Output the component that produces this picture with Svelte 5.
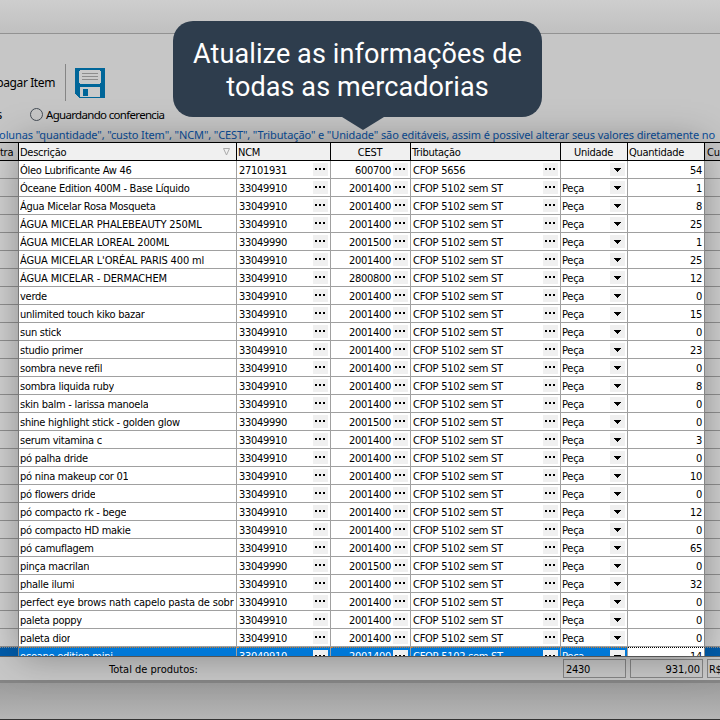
<script lang="ts">
  type Row = {
    name: string;
    ncm: string;
    cest: string;
    tax: string;
    unit: string;
    qty: number;
  };

  function row(name: string, qty: number, ncm = '33049910', cest = '2001400'): Row {
    return { name, ncm, cest, tax: 'CFOP 5102 sem ST', unit: 'Peça', qty };
  }

  const rows: Row[] = [
    { name: 'Óleo Lubrificante Aw 46', ncm: '27101931', cest: '600700', tax: 'CFOP 5656', unit: '', qty: 54 },
    row('Óceane Edition 400M - Base Líquido', 1),
    row('Água Micelar Rosa Mosqueta', 8),
    row('ÁGUA MICELAR PHALEBEAUTY 250ML', 25),
    row('ÁGUA MICELAR LOREAL 200ML', 1, '33049990', '2001500'),
    row('ÁGUA MICELAR L\'ORÉAL PARIS 400 ml', 25),
    row('ÁGUA MICELAR - DERMACHEM', 12, '33049910', '2800800'),
    row('verde', 0),
    row('unlimited touch kiko bazar', 15),
    row('sun stick', 0),
    row('studio primer', 23),
    row('sombra neve refil', 0),
    row('sombra liquida ruby', 8),
    row('skin balm - larissa manoela', 0),
    row('shine highlight stick - golden glow', 0, '33049990', '2001500'),
    row('serum vitamina c', 3),
    row('pó palha dride', 0),
    row('pó nina makeup cor 01', 10),
    row('pó flowers dride', 0),
    row('pó compacto rk - bege', 12),
    row('pó compacto HD makie', 0),
    row('pó camuflagem', 65),
    row('pinça macrilan', 0, '33049990', '2001500'),
    row('phalle ilumi', 32),
    row('perfect eye brows nath capelo pasta de sobr', 0),
    row('paleta poppy', 0),
    row('paleta dior', 0),
    row('oceane edition mini', 14)
  ];

  let selected = $state(rows.length - 1);
</script>

{#snippet dots()}
  <button class="cell-btn" aria-label="Abrir">
    <svg width="15" height="13" shape-rendering="crispEdges">
      <path d="M2 5h2v2h-2zM6 5h2v2h-2zM10 5h2v2h-2z" />
    </svg>
  </button>
{/snippet}

{#snippet arrow()}
  <button class="cell-btn" aria-label="Escolher">
    <svg width="15" height="13" shape-rendering="crispEdges">
      <path d="M4 5h7v1h-1v1h-1v1h-1v1h-1v-1h-1v-1h-1v-1h-1z" />
    </svg>
  </button>
{/snippet}

<div class="screen">
  <div class="titlebar"></div>

  <header>
    <div class="toolbar">
      <span class="tool-label">pagar Item</span>
      <span class="divider"></span>
      <svg class="save" width="30" height="30" viewBox="0 0 30 30" shape-rendering="crispEdges">
        <path fill="#006699" d="M0 0h30v30H4v-1H3v-1H2v-1H1v-1H0z" />
        <path fill="#cacaca" d="M5 2h20v1h1v12h-1v1H5v-1H4V3h1zM5 19h20v10H5z" />
        <path fill="#8d8d8d" d="M7 5h16v1H7zM7 8h16v1H7zM7 11h16v1H7z" />
        <path fill="#006699" d="M8 21h5v7H8z" />
      </svg>
    </div>
    <div class="filters">
      <span class="cut">s</span>
      <i class="radio"></i>
      <span class="filter-label">Aguardando conferencia</span>
    </div>
    <p class="hint">olunas "quantidade", "custo Item", "NCM", "CEST", "Tributação" e "Unidade" são editáveis, assim é possivel alterar seus valores diretamente no</p>
  </header>

  <div class="grid">
    <div class="row head">
      <div class="side"><span>tra</span></div>
      <div class="sorted">
        <span>Descrição</span>
        <svg width="7" height="8" fill="none" stroke="#aaa"><path d="M.5 .5h6L3.5 7z" /></svg>
      </div>
      <div><span>NCM</span></div>
      <div class="center"><span>CEST</span></div>
      <div><span>Tributação</span></div>
      <div class="center"><span>Unidade</span></div>
      <div><span>Quantidade</span></div>
      <div class="side last"><span>Cu</span></div>
    </div>
    {#each rows as r, i}
      <div class="row" class:selected={i === selected}>
        <div class="side"></div>
        <div class="name" class:caps={r.name.startsWith('ÁGUA')} class:long={r.name.length > 40}>
          <span>{r.name}</span>
        </div>
        <div class="num"><span>{r.ncm}</span>{@render dots()}</div>
        <div class="num end"><span>{r.cest}</span>{@render dots()}</div>
        <div class="tax"><span>{r.tax}</span>{@render dots()}</div>
        <div class="unit"><span>{r.unit}</span>{@render arrow()}</div>
        <div class="num qty"><span>{r.qty}</span></div>
        <div class="side last"></div>
      </div>
    {/each}
  </div>

  <footer>
    <span class="total-label">Total de produtos:</span>
    <span class="box count">2430</span>
    <span class="box amount">931,00</span>
    <span class="box price">R$</span>
  </footer>
  <div class="backdrop"></div>

  <div class="spotlight"></div>

  <div class="bubble">
    <span>Atualize as informações de</span>
    <span>todas as mercadorias</span>
    <svg class="tail" width="42" height="13"><path d="M0 0h42L21 13z" fill="#2e3d4d" /></svg>
  </div>
</div>

<style>
  :global(body) {
    margin: 0;
    background: #bbb;
  }

  .screen {
    position: relative;
    width: 720px;
    height: 720px;
    overflow: hidden;
    display: flex;
    flex-direction: column;
    background: #c6c6c6;
    color: #000;
    font: 11px 'DejaVu Sans Condensed', 'DejaVu Sans', Tahoma, sans-serif;
    font-stretch: condensed;
    letter-spacing: -0.27px;
    white-space: nowrap;
  }

  .titlebar {
    flex: none;
    box-sizing: border-box;
    height: 34px;
    background: linear-gradient(#cecece, #c0c0c0);
    border-bottom: 1px solid #929292;
  }

  header {
    flex: none;
    display: flex;
    flex-direction: column;
    height: 108px;
    font-family: 'Noto Sans', sans-serif;
    font-stretch: normal;
    font-size: 12px;
  }

  .toolbar {
    display: flex;
    align-items: center;
    height: 37px;
    margin-top: 30px;
  }

  .tool-label {
    width: 55px;
    display: flex;
    justify-content: flex-end;
    letter-spacing: -0.4px;
  }

  .divider {
    width: 1px;
    height: 37px;
    margin: 0 9px 0 10px;
    background: #858585;
  }

  .filters {
    display: flex;
    align-items: center;
    height: 18px;
    margin-top: 5px;
  }

  .cut {
    width: 2px;
    display: flex;
    justify-content: flex-end;
  }

  .radio {
    box-sizing: border-box;
    width: 13px;
    height: 13px;
    margin: 0 3px 0 28px;
    border: 1px solid #444c55;
    border-radius: 50%;
  }

  .filter-label {
    font-size: 11.5px;
    letter-spacing: -0.68px;
  }

  .hint {
    display: flex;
    justify-content: flex-end;
    width: 715px;
    margin: 4px 0 0;
    line-height: 16px;
    color: #0a4f9c;
    font-size: 11px;
    letter-spacing: -0.12px;
  }

  .grid {
    flex: none;
    height: 513px;
    border-top: 1px solid #000;
    border-bottom: 1px solid #666;
    overflow: hidden;
  }

  .row {
    display: grid;
    grid-template-columns: 19px 218px 94px 80px 150px 67px 77px 15px;
    height: 18px;
  }

  .row > div {
    box-sizing: border-box;
    display: flex;
    align-items: center;
    justify-content: space-between;
    overflow: hidden;
    min-width: 0;
    padding: 0 2px;
    background: #fff;
    border-right: 1px solid #a0a0a0;
    border-bottom: 1px solid #a0a0a0;
  }

  .row span {
    padding-top: 1px;
  }

  .row > div.side {
    background: #d2d2d2;
    border-color: #909090;
  }

  .row > div.last {
    border-right: 0;
  }

  .row > div.name,
  .row > div.unit,
  .row > div.sorted {
    padding-left: 1px;
  }

  .head > div {
    padding-left: 1px;
    background: #f0f0f0;
    border-color: #000;
  }

  .head > div.side {
    justify-content: flex-start;
    padding: 0 1px 0 0;
    background: #cacaca;
    border-color: #000;
  }

  .head > div.last {
    padding-left: 2px;
  }

  .head > .center {
    justify-content: center;
  }

  .sorted svg {
    margin-right: 4px;
  }

  .name span {
    overflow: hidden;
  }

  .caps {
    letter-spacing: -0.14px;
  }

  .long {
    letter-spacing: -0.18px;
  }

  .num {
    letter-spacing: -0.3px;
  }

  .row > .end span {
    flex: 1;
    text-align: right;
    margin-right: 2px;
  }

  .row > .qty {
    justify-content: flex-end;
  }

  .cell-btn {
    flex: none;
    width: 15px;
    height: 13px;
    padding: 0;
    border: 0;
    background: #f0f0f0;
  }

  .cell-btn svg {
    display: block;
  }

  .selected > div {
    background: #0078d7;
    color: #fff;
    border-top: 1px dotted #d08030;
  }

  .selected > div.side {
    background: #005cab;
  }

  .selected > div.qty {
    background: #fff;
    color: #000;
    border-top-color: #000;
  }

  footer {
    flex: none;
    box-sizing: border-box;
    display: flex;
    align-items: center;
    height: 26px;
    background: #c8c8c8;
    border-bottom: 3px solid #858585;
  }

  .total-label {
    flex: none;
    box-sizing: border-box;
    width: 563px;
    padding: 1px 0 0 109px;
    letter-spacing: 0;
  }

  .box {
    flex: none;
    box-sizing: border-box;
    height: 19px;
    line-height: 19px;
    padding: 0 2px;
    border: 1px solid #858585;
  }

  .count {
    width: 63px;
    margin-right: 4px;
  }

  .amount {
    width: 73px;
    margin-right: 4px;
    text-align: right;
    letter-spacing: 0;
  }

  .price {
    width: 30px;
    padding-left: 1px;
  }

  .backdrop {
    flex: 1;
    background: linear-gradient(#9c9c9c, #b5b5b5);
    border-bottom: 1px solid #333;
  }

  .spotlight {
    position: absolute;
    left: 19px;
    top: 143px;
    width: 685px;
    height: 513px;
    box-shadow: 0 0 36px rgba(0, 0, 0, 0.35);
    pointer-events: none;
  }

  .bubble {
    position: absolute;
    left: 173px;
    top: 21px;
    width: 369px;
    height: 96px;
    border-radius: 20px;
    background: #2e3d4d;
    color: #fff;
    font: 27px/33px Roboto, sans-serif;
    letter-spacing: 0.1px;
    box-sizing: border-box;
    padding-top: 17px;
    display: flex;
    flex-direction: column;
    align-items: center;
  }

  .tail {
    position: absolute;
    left: 169px;
    top: 96px;
  }
</style>
